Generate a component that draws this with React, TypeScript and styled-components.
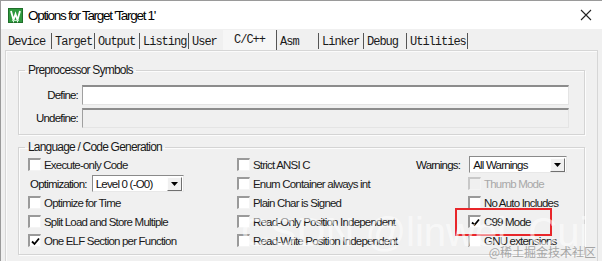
import React from 'react';
import styled, { createGlobalStyle } from 'styled-components';

const GlobalStyle = createGlobalStyle`
  html, body {
    margin: 0;
    padding: 0;
    background: #f0f0f0;
    overflow: hidden;
  }
`;

const Window = styled.div`
  position: relative;
  width: 602px;
  height: 261px;
  box-sizing: border-box;
  border-top: 1px solid #9a9a9a;
  border-left: 1px solid #9a9a9a;
  background: #f0f0f0;
  font-family: 'Liberation Sans', Arial, sans-serif;
  font-size: 11.5px;
  letter-spacing: -0.8px;
  color: #111;
  overflow: hidden;
`;

const TitleBar = styled.div`
  height: 28px;
  background: #ffffff;
  display: flex;
  align-items: center;
  padding-left: 7px;
  padding-right: 10px;
`;

const Title = styled.span`
  flex: 1;
  margin-left: 5px;
  font-size: 13.5px;
  letter-spacing: -1.3px;
  color: #000;
`;

const CloseButton = styled.span`
  width: 12px;
  height: 12px;
  display: flex;
`;

const TabStrip = styled.div`
  height: 21px;
  display: flex;
  align-items: flex-end;
  padding-left: 4px;
  font-family: 'Liberation Mono', 'Courier New', monospace;
  font-size: 12px;
  letter-spacing: -1px;
`;

const Tab = styled.div<{ $w: number; $active?: boolean; $sep?: boolean }>`
  width: ${p => p.$w}px;
  box-sizing: border-box;
  height: ${p => (p.$active ? 20 : 16)}px;
  margin-bottom: ${p => (p.$active ? 0 : 1)}px;
  padding-left: ${p => (p.$active ? 11 : 3)}px;
  padding-top: ${p => (p.$active ? 4 : 3)}px;
  line-height: 13px;
  border-right: 1px solid ${p => (p.$sep === false ? 'transparent' : '#555')};
  background: ${p => (p.$active ? '#f6f6f6' : 'transparent')};
  white-space: nowrap;
  color: #1a1a1a;
`;

const Panel = styled.div`
  margin-left: 4px;
  margin-right: 4px;
  height: 220px;
  border: 1px solid #d6d6d6;
  border-bottom: none;
  box-shadow: inset 1px 1px 0 #fbfbfb;
  padding: 12px 12px 0 12px;
`;

const Group = styled.fieldset<{ $gap?: number }>`
  margin: ${p => p.$gap ?? 0}px 0 0 0;
  padding: 0;
  border: 1px solid #d4d4d4;
  box-shadow: inset 1px 1px 0 #fcfcfc, 1px 1px 0 #fcfcfc;
  min-width: 0;
`;

const Legend = styled.legend`
  margin-left: 6px;
  padding: 0 3px;
  font-size: 12px;
  letter-spacing: -0.8px;
  line-height: 14px;
  color: #1a1a1a;
`;

const SymbolGrid = styled.div`
  display: grid;
  grid-template-columns: 59px 487px;
  column-gap: 4px;
  row-gap: 3px;
  align-items: center;
  padding: 8px 0 6px 0;
`;

const FieldLabel = styled.span`
  text-align: right;
`;

const TextField = styled.div<{ $disabled?: boolean }>`
  height: 20px;
  box-sizing: border-box;
  border-top: 2px solid #8c8c8c;
  border-left: 1px solid #a0a0a0;
  border-right: 1px solid #e4e4e4;
  border-bottom: 1px solid #e4e4e4;
  background: ${p => (p.$disabled ? '#f0f0f0' : '#ffffff')};
`;

const OptionGrid = styled.div`
  display: grid;
  grid-template-columns: 209px 179px 1fr;
  grid-auto-rows: 19px;
  padding: 1px 0 4px 9px;
  align-items: center;
`;

const Cell = styled.div<{ $indent?: number }>`
  display: flex;
  align-items: center;
  padding-left: ${p => p.$indent ?? 0}px;
  white-space: nowrap;
`;

const Box = styled.span<{ $disabled?: boolean }>`
  width: 13px;
  height: 13px;
  box-sizing: border-box;
  margin-right: 3px;
  border-top: 2px solid ${p => (p.$disabled ? '#c8c8c8' : '#9a9a9a')};
  border-left: 2px solid ${p => (p.$disabled ? '#c8c8c8' : '#9a9a9a')};
  border-right: 1px solid #f4f4f4;
  border-bottom: 1px solid #f4f4f4;
  background: ${p => (p.$disabled ? '#f0f0f0' : '#ffffff')};
  display: flex;
  align-items: center;
  justify-content: center;
`;

const OptionText = styled.span<{ $disabled?: boolean }>`
  color: ${p => (p.$disabled ? '#a8a8a8' : '#1a1a1a')};
`;

const SelectLabel = styled.span<{ $gap: number }>`
  margin-right: ${p => p.$gap}px;
`;

const Select = styled.div<{ $w: number }>`
  width: ${p => p.$w}px;
  height: 17px;
  box-sizing: border-box;
  display: flex;
  align-items: center;
  border-top: 1px solid #8a8a8a;
  border-left: 1px solid #8a8a8a;
  border-right: 1px solid #e8e8e8;
  border-bottom: 1px solid #e8e8e8;
  background: #ffffff;
  padding-left: 3px;
`;

const SelectValue = styled.span`
  flex: 1;
`;

const DropButton = styled.span`
  width: 15px;
  height: 14px;
  box-sizing: border-box;
  margin-right: 1px;
  border: 1px solid #fdfdfd;
  border-right-color: #707070;
  border-bottom-color: #707070;
  background: #f0f0f0;
  display: flex;
  align-items: center;
  justify-content: center;
`;

const Highlight = styled.div`
  position: absolute;
  left: 454px;
  top: 207px;
  width: 97px;
  height: 28px;
  box-sizing: border-box;
  border: 2px solid #e8262a;
  pointer-events: none;
`;

const Watermark = styled.div`
  position: absolute;
  left: 240px;
  top: 209px;
  font-size: 40px;
  letter-spacing: 0;
  color: rgba(255, 255, 255, 0.55);
  white-space: nowrap;
  pointer-events: none;
`;

const SiteMark = styled.div`
  position: absolute;
  right: 6px;
  bottom: 1px;
  font-family: 'Noto Sans CJK SC', sans-serif;
  font-size: 12px;
  letter-spacing: 0;
  color: rgba(140, 140, 140, 0.75);
  pointer-events: none;
`;

const tabs = [
  { label: 'Device', w: 47 },
  { label: 'Target', w: 43 },
  { label: 'Output', w: 45 },
  { label: 'Listing', w: 49 },
  { label: 'User', w: 34, sep: false },
  { label: 'C/C++', w: 54, active: true },
  { label: 'Asm', w: 42 },
  { label: 'Linker', w: 45 },
  { label: 'Debug', w: 43 },
  { label: 'Utilities', w: 61 }
];

const AppIcon = () => (
  <svg width="15" height="15" viewBox="0 0 15 15">
    <rect x="0" y="0" width="15" height="15" fill="#2f9a3e" />
    <rect x="0.5" y="0.5" width="14" height="14" fill="none" stroke="#1f6e2a" />
    <path d="M3 3 L5.5 12 L7.5 6 L9.5 12 L12 3" fill="none" stroke="#fff" strokeWidth="1.8" />
    <path d="M4 12.5 L11 12.5" stroke="#bfe6c4" strokeWidth="1" />
  </svg>
);

const Check = () => (
  <svg width="9" height="9" viewBox="0 0 9 9">
    <path d="M1 4.5 L3.5 7 L8 1.5" fill="none" stroke="#000" strokeWidth="1.8" />
  </svg>
);

const Arrow = () => (
  <svg width="7" height="4" viewBox="0 0 7 4">
    <path d="M0 0 H7 L3.5 4 Z" fill="#000" />
  </svg>
);

function Option({ label, checked, disabled, indent }: { label: string; checked?: boolean; disabled?: boolean; indent?: number }) {
  return (
    <Cell $indent={indent}>
      <Box $disabled={disabled}>{checked && <Check />}</Box>
      <OptionText $disabled={disabled}>{label}</OptionText>
    </Cell>
  );
}

function App() {
  return (
    <Window>
      <GlobalStyle />
      <TitleBar>
        <AppIcon />
        <Title>Options for Target 'Target 1'</Title>
        <CloseButton>
          <svg width="12" height="12" viewBox="0 0 12 12">
            <path d="M1 1 L11 11 M11 1 L1 11" stroke="#222" strokeWidth="1.1" />
          </svg>
        </CloseButton>
      </TitleBar>

      <TabStrip>
        {tabs.map(t => (
          <Tab key={t.label} $w={t.w} $active={t.active} $sep={t.sep}>
            {t.label}
          </Tab>
        ))}
      </TabStrip>

      <Panel>
        <Group>
          <Legend>Preprocessor Symbols</Legend>
          <SymbolGrid>
            <FieldLabel>Define:</FieldLabel>
            <TextField />
            <FieldLabel>Undefine:</FieldLabel>
            <TextField $disabled />
          </SymbolGrid>
        </Group>

        <Group $gap={5}>
          <Legend>Language / Code Generation</Legend>
          <OptionGrid>
            <Option label="Execute-only Code" />
            <Option label="Strict ANSI C" />
            <Cell>
              <SelectLabel $gap={9}>Warnings:</SelectLabel>
              <Select $w={98}>
                <SelectValue>All Warnings</SelectValue>
                <DropButton><Arrow /></DropButton>
              </Select>
            </Cell>

            <Cell $indent={2}>
              <SelectLabel $gap={5}>Optimization:</SelectLabel>
              <Select $w={92}>
                <SelectValue>Level 0 (-O0)</SelectValue>
                <DropButton><Arrow /></DropButton>
              </Select>
            </Cell>
            <Option label="Enum Container always int" />
            <Option label="Thumb Mode" disabled indent={52} />

            <Option label="Optimize for Time" />
            <Option label="Plain Char is Signed" />
            <Option label="No Auto Includes" indent={52} />

            <Option label="Split Load and Store Multiple" />
            <Option label="Read-Only Position Independent" />
            <Option label="C99 Mode" checked indent={52} />

            <Option label="One ELF Section per Function" checked />
            <Option label="Read-Write Position Independent" />
            <Option label="GNU extensions" indent={52} />
          </OptionGrid>
        </Group>
      </Panel>

      <Highlight />
      <Watermark>CSDN @linwei_Cui</Watermark>
      <SiteMark>@稀土掘金技术社区</SiteMark>
    </Window>
  );
}

export default App;
